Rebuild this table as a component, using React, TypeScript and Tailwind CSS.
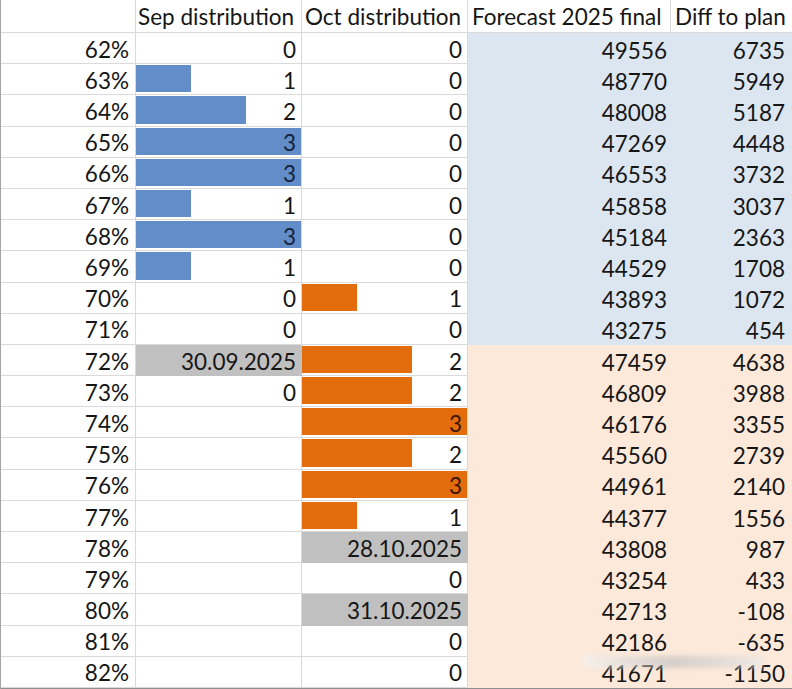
import React from "react";

type Cell = number | string | null;

const rows: { pct: number; sep: Cell; oct: Cell; forecast: number; diff: number }[] = [
  { pct: 62, sep: 0, oct: 0, forecast: 49556, diff: 6735 },
  { pct: 63, sep: 1, oct: 0, forecast: 48770, diff: 5949 },
  { pct: 64, sep: 2, oct: 0, forecast: 48008, diff: 5187 },
  { pct: 65, sep: 3, oct: 0, forecast: 47269, diff: 4448 },
  { pct: 66, sep: 3, oct: 0, forecast: 46553, diff: 3732 },
  { pct: 67, sep: 1, oct: 0, forecast: 45858, diff: 3037 },
  { pct: 68, sep: 3, oct: 0, forecast: 45184, diff: 2363 },
  { pct: 69, sep: 1, oct: 0, forecast: 44529, diff: 1708 },
  { pct: 70, sep: 0, oct: 1, forecast: 43893, diff: 1072 },
  { pct: 71, sep: 0, oct: 0, forecast: 43275, diff: 454 },
  { pct: 72, sep: "30.09.2025", oct: 2, forecast: 47459, diff: 4638 },
  { pct: 73, sep: 0, oct: 2, forecast: 46809, diff: 3988 },
  { pct: 74, sep: null, oct: 3, forecast: 46176, diff: 3355 },
  { pct: 75, sep: null, oct: 2, forecast: 45560, diff: 2739 },
  { pct: 76, sep: null, oct: 3, forecast: 44961, diff: 2140 },
  { pct: 77, sep: null, oct: 1, forecast: 44377, diff: 1556 },
  { pct: 78, sep: null, oct: "28.10.2025", forecast: 43808, diff: 987 },
  { pct: 79, sep: null, oct: 0, forecast: 43254, diff: 433 },
  { pct: 80, sep: null, oct: "31.10.2025", forecast: 42713, diff: -108 },
  { pct: 81, sep: null, oct: 0, forecast: 42186, diff: -635 },
  { pct: 82, sep: null, oct: 0, forecast: 41671, diff: -1150 },
];

const font = { fontFamily: "Lato, 'Open Sans', sans-serif" };

function BarCell({ value, color, textColor }: { value: Cell; color: "blue" | "orange"; textColor: string }) {
  if (typeof value === "string") {
    return (
      <div className="flex items-end justify-end bg-[#c0c0c0] border-r border-b border-[#c0c0c0] pr-[5px] pb-[2px]">
        {value}
      </div>
    );
  }
  return (
    <div className="relative flex items-end justify-end border-r border-b border-[#dadada] pr-[5px] pb-[2px]">
      {value !== null && value > 0 && (
        <div
          className={`absolute left-0 top-px bottom-[2px] ${color === "blue" ? "bg-[#628dc8]" : "bg-[#e36c0c]"}`}
          style={{ width: `${(value / 3) * 100}%` }}
        />
      )}
      {value !== null && (
        <span className={`relative ${value === 3 ? textColor : ""}`}>{value}</span>
      )}
    </div>
  );
}

export default function App() {
  return (
    <div className="relative w-[792px] h-[689px] overflow-hidden bg-white text-[22.5px] text-[#161616]" style={font}>
      <div className="grid grid-cols-[135px_166px_166px_203px_1fr] grid-rows-[33px_repeat(21,31.2px)] border-l border-b-2 border-l-[#a3a3a3] border-b-[#8f8f8f] leading-none">
        <div className="border-r border-b border-[#dadada]" />
        <div className="flex items-end border-r border-b border-[#dadada] pl-[2px] pb-[4px]">Sep distribution</div>
        <div className="flex items-end border-r border-b border-[#dadada] pl-[3px] pb-[4px]">Oct distribution</div>
        <div className="flex items-end border-r border-b border-[#dadada] pl-[4px] pb-[4px]">Forecast 2025 final</div>
        <div className="flex items-end border-b border-[#dadada] pl-[4px] pb-[4px]">Diff to plan</div>
        {rows.map((r) => {
          const fill = r.pct <= 71 ? "bg-[#dce6f1]" : "bg-[#fce9da]";
          return (
            <React.Fragment key={r.pct}>
              <div className="flex items-end justify-end border-r border-b border-[#dadada] pr-[6px] pb-[2px]">{r.pct}%</div>
              <BarCell value={r.sep} color="blue" textColor="text-[#14233f]" />
              <BarCell value={r.oct} color="orange" textColor="text-[#3b1606]" />
              <div className={`flex items-end justify-end pr-[4px] pb-[2px] ${fill}`}>{r.forecast}</div>
              <div className={`flex items-end justify-end pr-[7px] pb-[2px] ${fill}`}>{r.diff}</div>
            </React.Fragment>
          );
        })}
      </div>
      <div className="absolute left-[583px] top-[656px] w-[180px] h-[12px] bg-gradient-to-r from-[#f4f4f4]/70 via-[#bdbdbd]/60 to-[#e8e8e8]/60 blur-[2px]" />
    </div>
  );
}
